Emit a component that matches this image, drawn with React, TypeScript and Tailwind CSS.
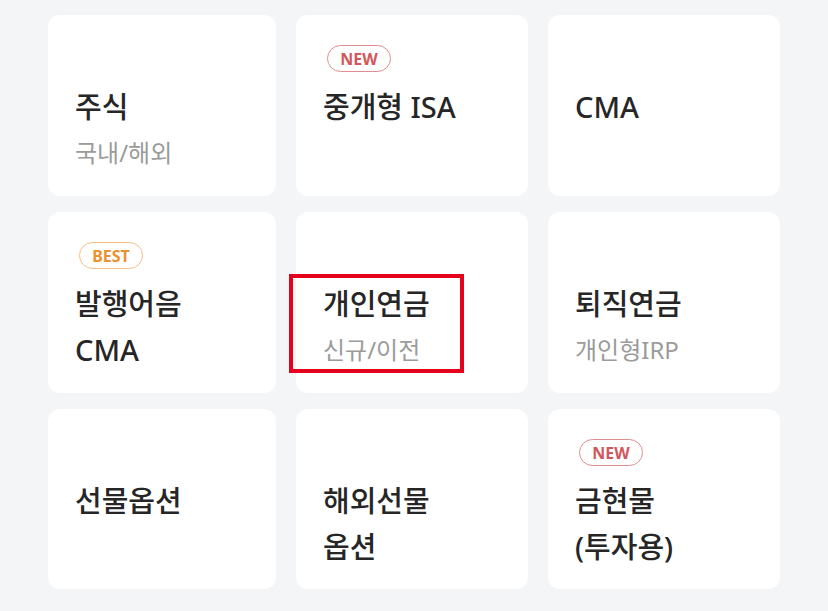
import type { ReactNode } from 'react';

type Badge = 'NEW' | 'BEST';

type Item = {
  title: ReactNode;
  sub?: string;
  badge?: Badge;
  marked?: boolean;
};

const items: Item[] = [
  { title: '주식', sub: '국내/해외' },
  { title: '중개형 ISA', badge: 'NEW' },
  { title: 'CMA' },
  { title: <>발행어음<br />CMA</>, badge: 'BEST' },
  { title: '개인연금', sub: '신규/이전', marked: true },
  { title: '퇴직연금', sub: '개인형IRP' },
  { title: '선물옵션' },
  { title: <>해외선물<br />옵션</> },
  { title: <>금현물<br />(투자용)</>, badge: 'NEW' },
];

function Tag({ kind }: { kind: Badge }) {
  const cls =
    kind === 'NEW'
      ? 'border-[#de8e90] text-[#d2575c]'
      : 'border-[#f1bf84] text-[#ea9130]';
  return (
    <span
      className={`ml-[4px] flex h-[27px] w-[64px] items-center justify-center rounded-full border bg-white text-[16px] font-bold leading-none ${cls}`}
    >
      {kind}
    </span>
  );
}

function Card({ item }: { item: Item }) {
  return (
    <div className="relative flex flex-col rounded-[12px] bg-white pl-[27px] pt-[30px]">
      <div className="flex h-[27px] items-center">{item.badge && <Tag kind={item.badge} />}</div>
      <div className="mt-[12px] text-[29px] font-medium leading-[46px] text-[#262626]">{item.title}</div>
      {item.sub && <div className="text-[24px] leading-[46px] text-[#9b9b9b]">{item.sub}</div>}
      {item.marked && (
        <div className="absolute left-[-7px] top-[62px] h-[99px] w-[175px] border-4 border-[#e5001b]" />
      )}
    </div>
  );
}

export default function App() {
  return (
    <div
      className="h-[611px] w-[828px] bg-[#f4f5f7] pl-[48px] pt-[15px]"
      style={{ fontFamily: '"Noto Sans", "Noto Sans CJK KR", sans-serif' }}
    >
      <div className="grid grid-cols-[228px_232px_232px] grid-rows-[181px_181px_180px] gap-x-[20px] gap-y-[16px]">
        {items.map((it, i) => (
          <Card key={i} item={it} />
        ))}
      </div>
    </div>
  );
}
